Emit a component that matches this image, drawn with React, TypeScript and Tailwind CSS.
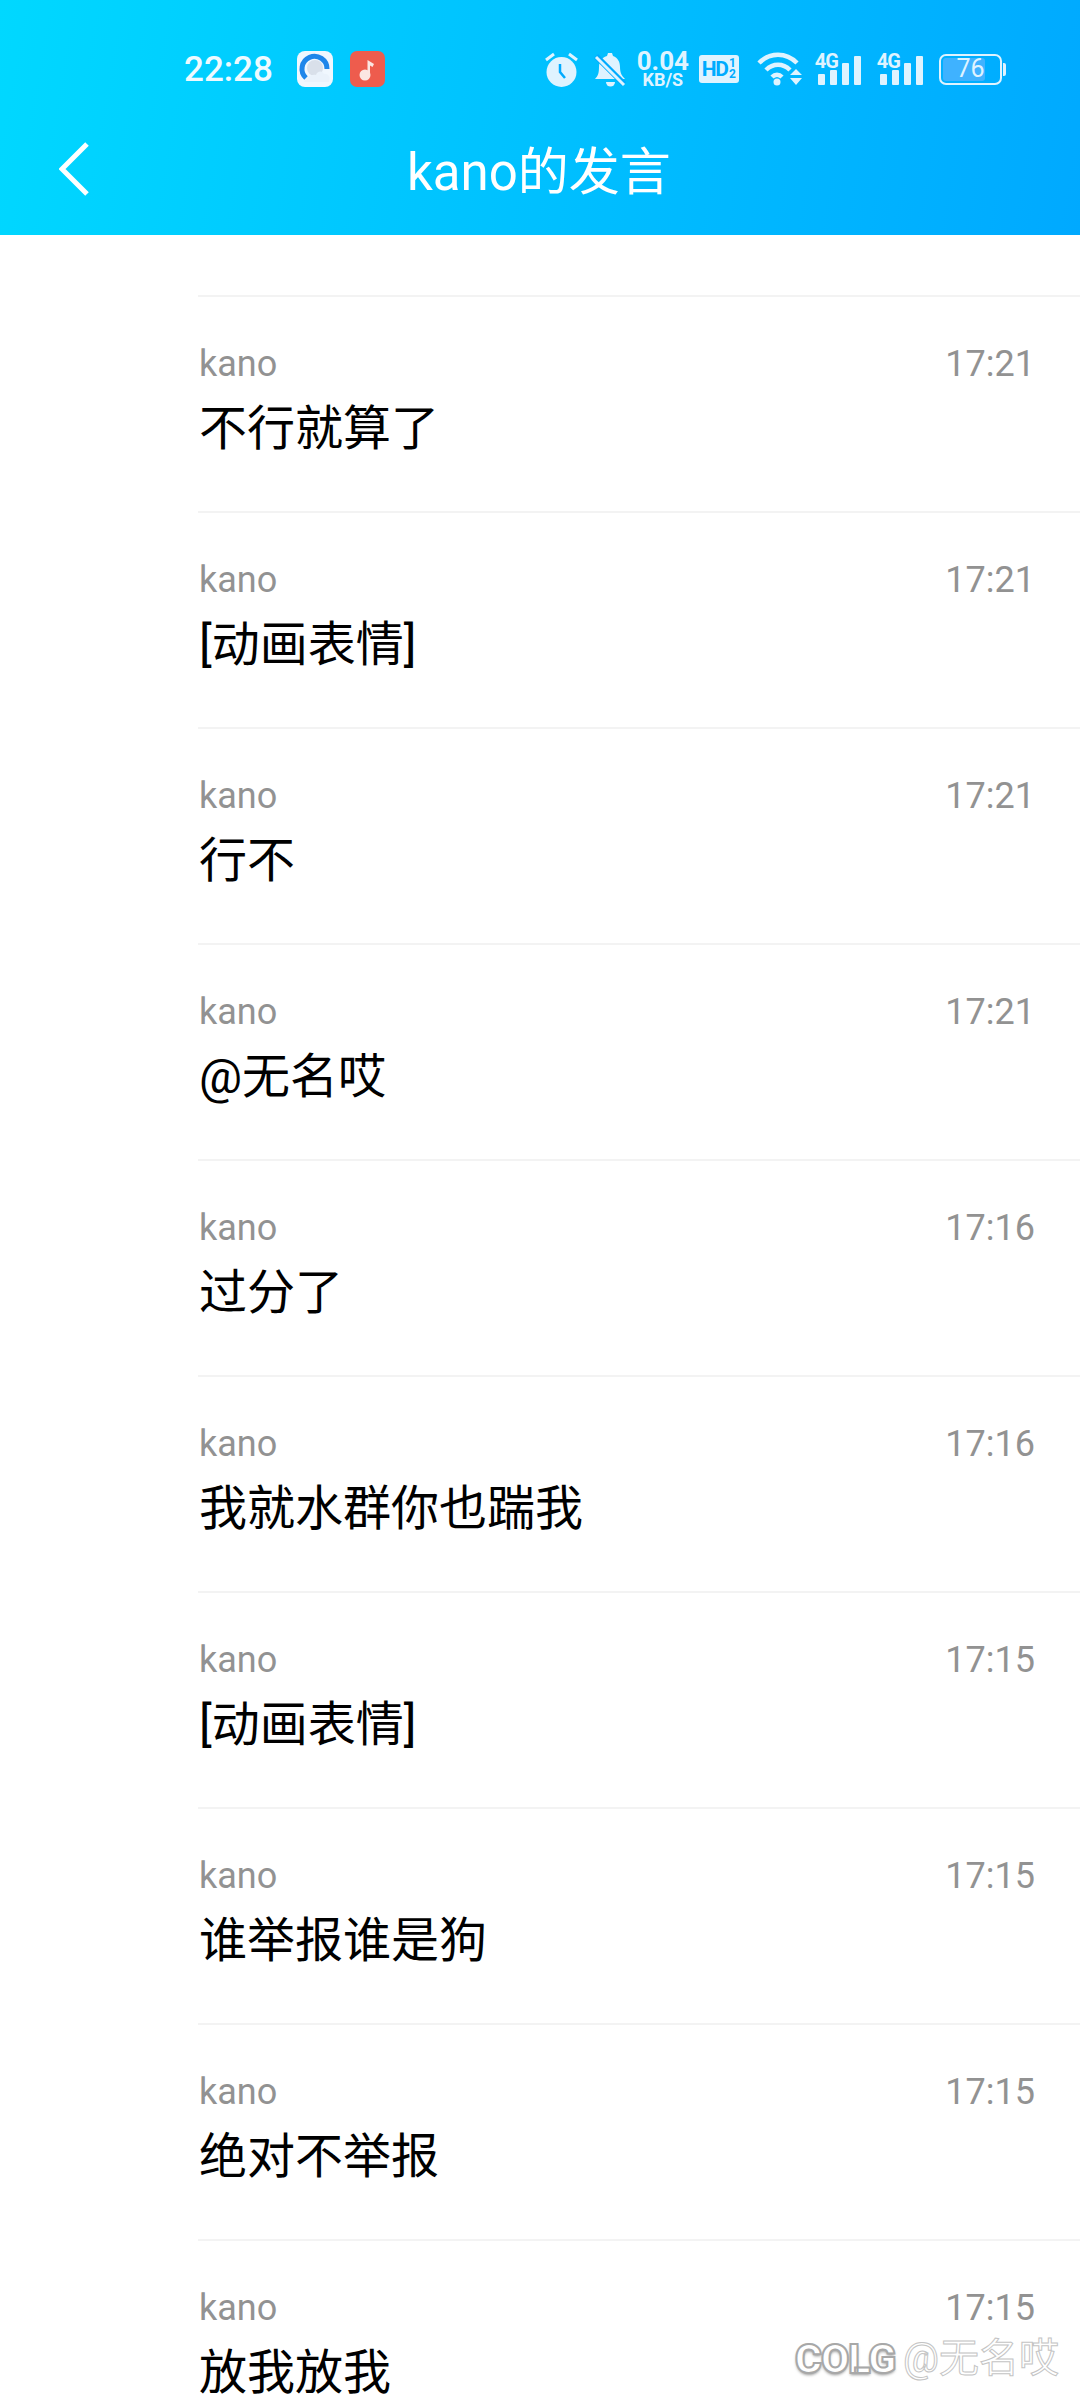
import React from 'react';

const messages = [
  { time: '17:21', text: '不行就算了' },
  { time: '17:21', text: '[动画表情]' },
  { time: '17:21', text: '行不' },
  { time: '17:21', text: '@无名哎' },
  { time: '17:16', text: '过分了' },
  { time: '17:16', text: '我就水群你也踹我' },
  { time: '17:15', text: '[动画表情]' },
  { time: '17:15', text: '谁举报谁是狗' },
  { time: '17:15', text: '绝对不举报' },
  { time: '17:15', text: '放我放我' },
];

const ICON = '#dff3ff';

function AppIcons() {
  return (
    <div className="ml-[24px] flex gap-[17px]">
      <svg width="36" height="36" viewBox="0 0 36 36">
        <rect width="36" height="36" rx="8" fill="#f0f7fe" />
        <circle cx="18" cy="17" r="8" fill="#d9e0ea" />
        <path d="M9 27A12.500 12.500 0 1 1 30 18" fill="none" stroke="#1f86ea" strokeWidth="5" />
        <path d="M7 31h25c2-5-1-9-5-8-2-4-7-3-8 1-5-1-9 2-12 7z" fill="#eaf2fb" />
      </svg>
      <svg width="35" height="36" viewBox="0 0 35 36">
        <rect width="35" height="36" rx="7" fill="#ee5c4d" />
        <circle cx="15" cy="24" r="5.500" fill="#fbe6e2" />
        <path d="M17.500 24V9l6.500 4-1.500 3-2.500-1.500V24z" fill="#fbe6e2" />
      </svg>
    </div>
  );
}

function Alarm() {
  return (
    <svg width="33" height="35" viewBox="0 0 33 35" fill={ICON}>
      <circle cx="16.500" cy="20" r="15" />
      <path d="M15 12v8l5 6" fill="none" stroke="#00abff" strokeWidth="2.500" />
      <path d="M1 8l8-6M32 8l-8-6" stroke={ICON} strokeWidth="3" />
    </svg>
  );
}

function MutedBell() {
  return (
    <svg width="33" height="35" viewBox="0 0 33 35" fill={ICON}>
      <path d="M1 27c3-3 4-6 4-12 0-6 4-10 8-11l1-3h4l1 3c5 2 7 6 7 11 0 6 2 9 5 12z" />
      <path d="M12 30h9a4.500 4.500 0 0 1-9 0z" />
      <path d="M2 4l28 28" stroke="#00abff" strokeWidth="6" />
      <path d="M2 5l28 28" stroke={ICON} strokeWidth="3" />
    </svg>
  );
}

function Speed() {
  return (
    <div className="flex w-[52px] flex-col items-center font-['Roboto',sans-serif] font-bold text-[#dff3ff]">
      <span className="text-[26px] leading-[20px]">0.04</span>
      <span className="mt-[1px] text-[18px] leading-[15px]">KB/S</span>
    </div>
  );
}

function HdBadge() {
  return (
    <div className="flex h-[28px] w-[40px] items-center justify-between rounded-[3px] bg-[#dff3ff] px-[3px] font-['Roboto',sans-serif] font-bold text-[#00abff]">
      <span className="text-[21px] leading-none tracking-[-1.5px]">HD</span>
      <span className="flex flex-col items-center text-[12px] leading-[11px]">
        <span>1</span>
        <span>2</span>
      </span>
    </div>
  );
}

function Wifi() {
  return (
    <svg width="45" height="34" viewBox="0 0 45 34" fill="none" stroke={ICON} strokeWidth="4.500">
      <path d="M2 11c11-11 27-11 38 0" />
      <path d="M9 18c7-7 17-7 24 0" />
      <path d="M15 25c3-3 7-3 10 0" />
      <circle cx="20" cy="30" r="3.500" fill={ICON} stroke="none" />
      <path d="M33 23l6-6 6 6zM33 26l6 7 6-7z" fill={ICON} stroke="none" />
    </svg>
  );
}

function Signal() {
  return (
    <div className="relative h-[32px] w-[46px]">
      <span className="absolute top-[-2px] left-0 font-['Roboto',sans-serif] text-[20px] leading-[20px] font-bold tracking-[-1px] text-[#dff3ff]">
        4G
      </span>
      <div className="absolute right-0 bottom-0 flex items-end gap-[5px]">
        <div className="h-[11px] w-[7px] rounded-[1px] bg-[#dff3ff]" />
        <div className="h-[15px] w-[7px] rounded-[1px] bg-[#dff3ff]" />
        <div className="h-[22px] w-[7px] rounded-[1px] bg-[#dff3ff]" />
        <div className="h-[29px] w-[7px] rounded-[1px] bg-[#dff3ff]" />
      </div>
    </div>
  );
}

function Battery() {
  return (
    <div className="flex items-center gap-[1px]">
      <div className="h-[31px] w-[63px] rounded-[7px] border-2 border-[#dff3ff] p-[2px]">
        <div className="flex h-full w-[76%] items-center justify-end rounded-[3px] bg-[#3fb2ff] font-['Roboto',sans-serif] text-[25px] text-[#dff3ff]">
          76
        </div>
      </div>
      <div className="h-[13px] w-[3px] rounded-r-[2px] bg-[#dff3ff]" />
    </div>
  );
}

function Header() {
  return (
    <header className="h-[235px] bg-linear-[100deg,#00d8ff,#00a9ff]">
      <div className="flex h-[134px] items-start pt-[51px] pl-[184px]">
        <div className="flex items-center">
          <span className="font-['Roboto',sans-serif] text-[35px] leading-[35px] font-medium text-[#eefaff]">22:28</span>
          <AppIcons />
          <div className="ml-[160px] flex items-center">
            <Alarm />
            <div className="ml-4"><MutedBell /></div>
            <div className="ml-[10px]"><Speed /></div>
            <div className="ml-[10px]"><HdBadge /></div>
            <div className="ml-[18px]"><Wifi /></div>
            <div className="ml-[13px]"><Signal /></div>
            <div className="ml-4"><Signal /></div>
            <div className="ml-4"><Battery /></div>
          </div>
        </div>
      </div>
      <div className="flex items-center pl-[59px]">
        <svg width="30" height="54" viewBox="0 0 30 54" fill="none" stroke="#ffffff" strokeWidth="5">
          <path d="M28 2L3 27l25 25" />
        </svg>
        <h1 className="mt-[9px] ml-[318px] font-['Roboto','Noto_Sans_CJK_SC',sans-serif] text-[51px] leading-[60px] font-normal text-white">
          kano的发言
        </h1>
      </div>
    </header>
  );
}

function MessageRow({ time, text }: { time: string; text: string }) {
  return (
    <div className="ml-[198px] h-[216px] border-t-2 border-[#f3f3f3] pt-[45px] pr-[45px]">
      <div className="flex items-center justify-between font-['Roboto',sans-serif] text-[36px] leading-[44px] text-[#929292]">
        <span className="ml-[1px]">kano</span>
        <span>{time}</span>
      </div>
      <div className="mt-[10px] ml-[1px] font-['Roboto','Noto_Sans_CJK_SC',sans-serif] text-[48px] leading-[66px] text-black">
        {text}
      </div>
    </div>
  );
}

export default function App() {
  return (
    <div className="relative h-[2400px] w-[1080px] overflow-hidden bg-white">
      <Header />
      <div className="pt-[60px]">
        {messages.map((m, i) => (
          <MessageRow key={i} time={m.time} text={m.text} />
        ))}
      </div>
      {/* watermark */}
      <div className="absolute top-[2337px] left-[795px] flex items-center gap-[8px]">
        <span className="font-['Roboto',sans-serif] text-[41px] leading-[44px] font-black tracking-[-1px] text-white [-webkit-text-stroke:2px_#a8a8a8] [text-shadow:0_2px_3px_#999999]">
          COLG
        </span>
        <span className="font-['Roboto','Noto_Sans_CJK_SC',sans-serif] text-[40px] leading-[44px] text-white [-webkit-text-stroke:1px_#c4c4c4]">
          @无名哎
        </span>
      </div>
    </div>
  );
}
